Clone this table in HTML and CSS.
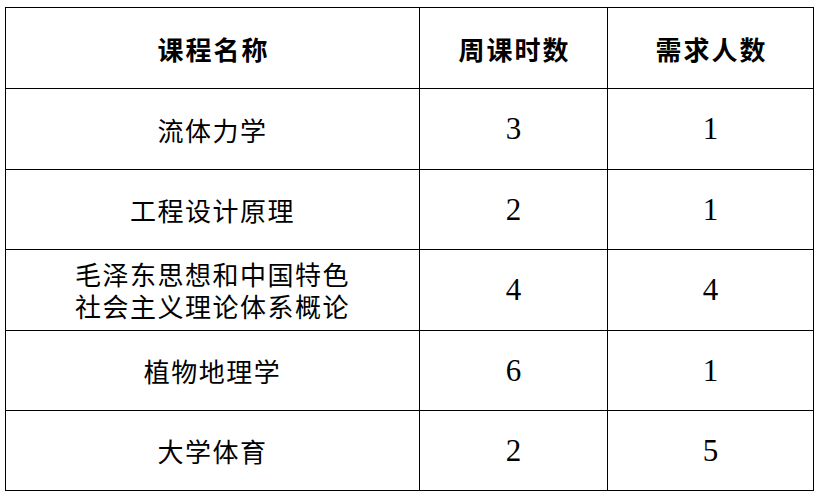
FILE: index.html
```html
<!DOCTYPE html>
<html lang="zh-CN">
<head>
<meta charset="utf-8">
<title>课程</title>
<link rel="stylesheet" href="styles.css">
</head>
<body>
<table class="course-table">
  <colgroup>
    <col class="col-name">
    <col class="col-hours">
    <col class="col-people">
  </colgroup>
  <thead>
    <tr class="r1">
      <th>课程名称</th>
      <th>周课时数</th>
      <th>需求人数</th>
    </tr>
  </thead>
  <tbody>
    <tr class="r2">
      <td class="zh">流体力学</td>
      <td class="num">3</td>
      <td class="num">1</td>
    </tr>
    <tr class="r3">
      <td class="zh">工程设计原理</td>
      <td class="num">2</td>
      <td class="num">1</td>
    </tr>
    <tr class="r4">
      <td class="zh two">毛泽东思想和中国特色<br>社会主义理论体系概论</td>
      <td class="num">4</td>
      <td class="num">4</td>
    </tr>
    <tr class="r5">
      <td class="zh">植物地理学</td>
      <td class="num">6</td>
      <td class="num">1</td>
    </tr>
    <tr class="r6">
      <td class="zh">大学体育</td>
      <td class="num">2</td>
      <td class="num">5</td>
    </tr>
  </tbody>
</table>
</body>
</html>
```
FILE: styles.css
```css
html, body {
  margin: 0;
  padding: 0;
  background: #fff;
}
body {
  padding: 7px 0 0 5px;
}
.course-table {
  border-collapse: collapse;
  table-layout: fixed;
  width: 809px;
  color: #000;
}
.col-name { width: 414px; }
.col-hours { width: 188px; }
.col-people { width: 206px; }
.course-table th,
.course-table td {
  border: 1.3px solid #000;
  padding: 0;
  text-align: center;
  vertical-align: middle;
}
.course-table th {
  font-family: "Noto Sans CJK SC", sans-serif;
  font-weight: 700;
  font-size: 26px;
  letter-spacing: 2px;
  padding-left: 2px;
}
.zh {
  font-family: "Noto Sans CJK SC", sans-serif;
  font-weight: 400;
  font-size: 26px;
  letter-spacing: 1.5px;
}
.zh.two {
  line-height: 32px;
}
.num {
  font-family: "Liberation Serif", "Times New Roman", serif;
  font-size: 31px;
}
.r1 { height: 81px; }
.r2 { height: 81px; }
.r3 { height: 80px; }
.r4 { height: 81px; }
.r5 { height: 80px; }
.r6 { height: 80px; }
```
